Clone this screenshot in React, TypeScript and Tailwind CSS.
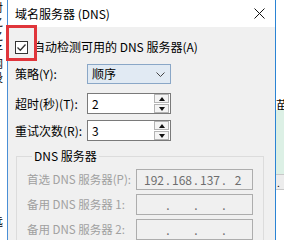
import React from 'react';

const font = "font-['Microsoft_YaHei_UI','Noto_Sans_CJK_SC',sans-serif]";

function Spinner() {
  return (
    <div className="flex flex-col gap-[1px] pr-[1px]">
      {[0, 1].map((i) => (
        <div
          key={i}
          className="w-[15px] h-[9px] border border-[#b4b4b4] bg-[#f4f4f4] flex items-center justify-center"
        >
          <svg width="6" height="4" viewBox="0 0 6 4">
            <path d={i === 0 ? 'M0 4 L3 0 L6 4 Z' : 'M0 0 L3 4 L6 0 Z'} fill="#111" />
          </svg>
        </div>
      ))}
    </div>
  );
}

function NumberBox({ value }: { value: string }) {
  return (
    <div className="w-[84px] h-[21px] border border-[#7a7a7a] bg-white flex items-center justify-between pl-[4px]">
      <span className="text-[12px] text-black">{value}</span>
      <Spinner />
    </div>
  );
}

function IpBox({ parts }: { parts: string[] }) {
  return (
    <div className="w-[117px] h-[21px] border border-[#adadad] bg-[#f0f0f0] flex items-center pl-[5px] text-[12px] text-[#6d6d6d]">
      {parts.map((p, i) => (
        <React.Fragment key={i}>
          <span className="w-[24px] text-center">{p}</span>
          {i < 3 && <span className="w-[4px] text-center">.</span>}
        </React.Fragment>
      ))}
    </div>
  );
}

function Row({ label, children, mt }: { label: string; children: React.ReactNode; mt: string }) {
  return (
    <div className={`flex items-center ${mt}`}>
      <div className="w-[79px] pl-[7px] text-[12px] text-black whitespace-nowrap">{label}</div>
      {children}
    </div>
  );
}

const dnsRows = [
  { label: '首选 DNS 服务器(P):', parts: ['192', '168', '137', '2'] },
  { label: '备用 DNS 服务器 1:', parts: ['', '', '', ''] },
  { label: '备用 DNS 服务器 2:', parts: ['', '', '', ''] },
];

export default function App() {
  return (
    <div className={`relative w-[284px] h-[240px] overflow-hidden bg-white flex ${font}`}>
      {/* window behind, left edge */}
      <div className="w-[8px] h-full overflow-hidden relative border-r border-[#4a8fd6]">
        <div className="-ml-[8px] flex flex-col text-[11px] leading-[14px] text-black">
          <span className="h-[14px]">对</span>
          <span className="h-[14px]">之</span>
          <span className="h-[14px]">之</span>
          <span className="h-[14px]">子</span>
          <span className="h-[14px]">网</span>
          <span className="h-[14px]">设</span>
        </div>
        <div className="absolute left-0 top-[213px] -ml-[8px] text-[11px] text-black">远</div>
      </div>

      {/* dialog */}
      <div className="w-[268px] h-full flex flex-col bg-[#f0f0f0] border-r border-[#2b84d4]">
        <div className="h-[30px] bg-white flex items-center justify-between pl-[7px] pr-[10px]">
          <span className="text-[12px] text-black">域名服务器 (DNS)</span>
          <svg width="11" height="11" viewBox="0 0 11 11">
            <path d="M0.5 0.5 L10.5 10.5 M10.5 0.5 L0.5 10.5" stroke="#111" strokeWidth="1" />
          </svg>
        </div>

        <div className="flex items-center mt-[11px] pl-[7px] gap-[5px]">
          <div className="w-[13px] h-[13px] border border-[#333] bg-white flex items-center justify-center">
            <svg width="11" height="11" viewBox="0 0 11 11">
              <path d="M1.5 5.5 L4.3 8.3 L9.5 2.5" stroke="#333" strokeWidth="1.3" fill="none" />
            </svg>
          </div>
          <span className="text-[12px] text-black">自动检测可用的 DNS 服务器(A)</span>
        </div>

        <Row label="策略(Y):" mt="mt-[8px]">
          <div className="w-[84px] h-[20px] border border-[#8aa7c7] bg-[#e1eaf3] flex items-center justify-between pl-[4px] pr-[5px]">
            <span className="text-[12px] text-black">顺序</span>
            <svg width="9" height="5" viewBox="0 0 9 5">
              <path d="M0.5 0.5 L4.5 4.5 L8.5 0.5" stroke="#444" strokeWidth="1" fill="none" />
            </svg>
          </div>
        </Row>
        <Row label="超时(秒)(T):" mt="mt-[9px]">
          <NumberBox value="2" />
        </Row>
        <Row label="重试次数(R):" mt="mt-[6px]">
          <NumberBox value="3" />
        </Row>

        <fieldset className="mt-[7px] ml-[8px] mr-[11px] border border-b-0 border-[#dcdcdc] pl-[10px] flex-1">
          <legend className="ml-[5px] px-[2px] text-[12px] leading-[16px] text-black">DNS 服务器</legend>
          <div className="flex flex-col gap-[4px] mt-[5px]">
            {dnsRows.map((r) => (
              <div key={r.label} className="flex items-center">
                <div className="w-[109px] text-[11.5px] text-[#a0a0a0] whitespace-nowrap">{r.label}</div>
                <IpBox parts={r.parts} />
              </div>
            ))}
          </div>
        </fieldset>
      </div>

      {/* window behind, right edge */}
      <div className="flex-1 h-full flex flex-col overflow-hidden">
        <div className="h-[100px] bg-white" />
        <div className="h-[10px] bg-white text-[12px] leading-[10px] text-black whitespace-nowrap">苗</div>
        <div className="h-[64px] bg-[#dcf0e5]" />
        <div className="h-[16px] bg-[#ececec] border-y border-[#c8c8c8] flex items-center pl-[1px] text-[10px] text-black">.</div>
        <div className="flex-1 bg-white" />
      </div>

      {/* highlight annotation */}
      <div className="absolute left-[6px] top-[25px] w-[31px] h-[36px] border-[3px] border-[#e0353b]" />
    </div>
  );
}
